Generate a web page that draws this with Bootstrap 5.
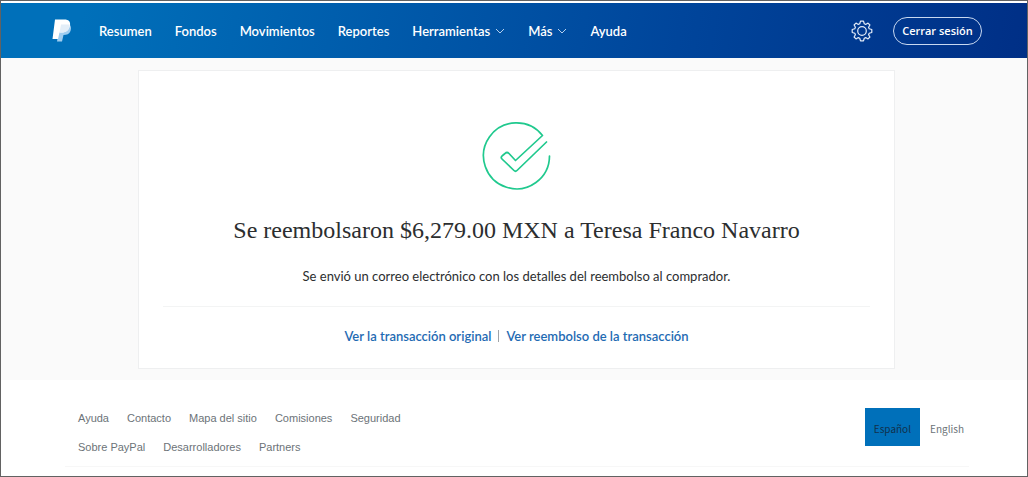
<!DOCTYPE html>
<html lang="es">
<head>
<meta charset="utf-8">
<meta name="viewport" content="width=device-width, initial-scale=1">
<title>Reembolso - PayPal</title>
<link href="https://cdn.jsdelivr.net/npm/bootstrap@5.3.0/dist/css/bootstrap.min.css" rel="stylesheet">
<style>
  body { font-family: "Noto Sans CJK SC", "Open Sans", sans-serif; font-size: 12px; line-height: 20px; color: #2c2e2f; background: #fff; }
  .frame { min-height: 100vh; border: 1px solid #626262; }
  .topbar { margin-top: 2px; height: 55px; background: linear-gradient(100deg, #0070ba 0%, #0070ba 8%, #00459b 66%, #002f86 100%); }
  .shell { width: 100%; max-width: 930px; margin: 0 auto; position: relative; left: 3px; }
  .main-links { gap: 23px; }
  .main-links .nav-link { padding: 0; color: #fff; font-family: Lato, sans-serif; font-weight: 600; font-size: 13px; line-height: 20px; display: flex; align-items: center; gap: 5px; }
  .brand { margin-right: 27px; line-height: 0; }
  .gear { margin-right: 20px; }
  .logout { width: 89px; height: 28px; padding: 0; border: 1px solid #c8d8f0; border-radius: 14px; color: #fff; font: 600 11px/26px "Open Sans", sans-serif; }
  .stage { background: #fafafa; padding: 12px 0 11px 5px; }
  .receipt { max-width: 757px; margin: 0 auto; padding: 50px 24px 22px; border: 1px solid #eeeff0; border-radius: 0; text-align: center; }
  .receipt h1 { margin: 23px 0 0; font: 400 24px/32px "Liberation Serif", serif; color: #2c2e2f; }
  .receipt p { margin: 20px 0 0; font-family: Lato, sans-serif; font-size: 13px; }
  .receipt hr { margin: 20px 0 19px; border-color: #d8d9da; opacity: .3; }
  .actions { gap: 7px; font-family: Lato, sans-serif; font-size: 13px; font-weight: 600; }
  .actions a { color: #1f6bb3; text-decoration: none; }
  .bar { width: 1px; height: 12px; background: #a0a4a8; }
  .foot { max-width: 904px; margin: 0 auto; padding: 28px 5px 0 13px; position: relative; left: 3px; height: 87px; border-bottom: 1px solid #f7f7f7; }
  .foot-links { font-family: "Liberation Sans", sans-serif; font-size: 11px; row-gap: 9px; }
  .foot-links .d-flex { column-gap: 18px; }
  .foot a { color: #6c7378; text-decoration: none; }
  .lang { font-size: 10px; line-height: 17px; }
  .foot .lang a { height: 38px; padding: 12px 0 0; }
  .foot .lang .chosen { background: #0070ba; color: #12314c; padding: 12px 9px 0; margin-right: 10px; }
</style>
</head>
<body>
<div class="frame">
  <header class="topbar d-flex align-items-center">
    <div class="shell d-flex align-items-center">
      <a class="brand" href="#" aria-label="PayPal">
        <svg width="20" height="23" viewBox="0 0 20 23"><path d="M8 5h9c2 1.500 2.500 4 1.500 7-1.200 3-3.800 4-7 4l-1.500 6.500H5z" fill="#9fcdf0"/><path d="M3 .5h9.500c4 0 6.200 2 5.500 6-1 4.500-4 7-8 7H7.500L6 20H.5z" fill="#fff"/><path d="M9 5.500h8.500c.5 5-3 8-7.500 8H7.500L9 5.500z" fill="#e3eef8"/></svg>
      </a>
      <nav class="nav main-links flex-nowrap">
        <a class="nav-link" href="#">Resumen</a>
        <a class="nav-link" href="#">Fondos</a>
        <a class="nav-link" href="#">Movimientos</a>
        <a class="nav-link" href="#">Reportes</a>
        <a class="nav-link" href="#">Herramientas <svg width="10" height="6" viewBox="0 0 10 6" fill="none" stroke="#b5d0ee"><path d="M1 1l4 4 4-4"/></svg></a>
        <a class="nav-link" href="#">Más <svg width="10" height="6" viewBox="0 0 10 6" fill="none" stroke="#b5d0ee"><path d="M1 1l4 4 4-4"/></svg></a>
        <a class="nav-link" href="#">Ayuda</a>
      </nav>
      <a class="gear ms-auto lh-1" href="#" aria-label="Configuración">
        <svg class="d-block" width="22" height="22" viewBox="-11 -11 22 22" fill="none" stroke="#e3ecf8" stroke-width="1.200" stroke-linejoin="round"><path d="M-1.500-9.800h3l.8 2.600L3.700-6.600 6-7.900 7.900-6 6.600-3.700l.6 1.400 2.600.8v3l-2.600.8-.6 1.400L7.900 6 6 7.900 3.700 6.600l-1.400.6-.8 2.600h-3l-.8-2.600-1.400-.6L-6 7.900-7.900 6l1.300-2.300-.6-1.400-2.600-.8v-3l2.600-.8.6-1.400L-7.900-6-6-7.900l2.300 1.300 1.400-.6z"/><circle r="4.300"/></svg>
      </a>
      <button class="logout btn" type="button">Cerrar sesión</button>
    </div>
  </header>
  <main class="stage">
    <section class="card receipt d-block">
      <svg class="d-block mx-auto" width="70" height="70" viewBox="1 1 70 70" fill="none" stroke="#20c98e" stroke-width="1.700" stroke-linejoin="round" stroke-linecap="round"><path d="M68.500 36A33 33 0 1 1 61.500 15.500L34.500 40.500l-6.500-7q-2-2-4 0l-3 2.500q-1.500 1.500 0 3L33 50.500q1.500 1.500 3 0L65.500 22"/></svg>
      <h1>Se reembolsaron $6,279.00 MXN a Teresa Franco Navarro</h1>
      <p>Se envió un correo electrónico con los detalles del reembolso al comprador.</p>
      <hr>
      <div class="actions d-flex justify-content-center align-items-center">
        <a href="#">Ver la transacción original</a><span class="bar"></span><a href="#">Ver reembolso de la transacción</a>
      </div>
    </section>
  </main>
  <footer class="foot d-flex justify-content-between align-items-start">
    <div class="foot-links d-grid">
      <div class="d-flex"><a href="#">Ayuda</a><a href="#">Contacto</a><a href="#">Mapa del sitio</a><a href="#">Comisiones</a><a href="#">Seguridad</a></div>
      <div class="d-flex"><a href="#">Sobre PayPal</a><a href="#">Desarrolladores</a><a href="#">Partners</a></div>
    </div>
    <div class="lang d-flex"><a class="chosen" href="#">Español</a><a href="#">English</a></div>
  </footer>
</div>
<script src="https://cdn.jsdelivr.net/npm/bootstrap@5.3.0/dist/js/bootstrap.bundle.min.js"></script>
</body>
</html>
